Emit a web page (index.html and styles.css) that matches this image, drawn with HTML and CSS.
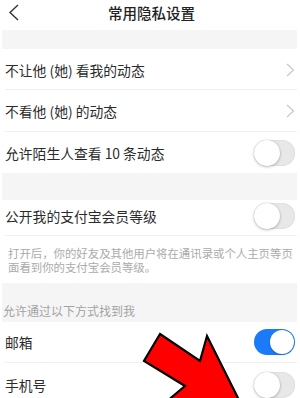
FILE: index.html
```html
<!DOCTYPE html>
<html lang="zh-CN">
<head>
<meta charset="utf-8">
<title>常用隐私设置</title>
<link rel="stylesheet" href="styles.css">
</head>
<body>
<div class="page">
  <header class="header">
    <svg class="back" width="12" height="17" viewBox="0 0 12 17"><polyline points="10,1 2,8.5 10,16" fill="none" stroke="#333" stroke-width="1.4"/></svg>
    <div class="title">常用隐私设置</div>
  </header>
  <div class="band band-top"></div>
  <div class="row r1"><span class="label">不让他 (她) 看我的动态</span><svg class="chev" width="9" height="14" viewBox="0 0 9 14"><polyline points="1,1 7.5,7 1,13" fill="none" stroke="#c9c9c9" stroke-width="1.2"/></svg></div>
  <div class="row r2"><span class="label">不看他 (她) 的动态</span><svg class="chev" width="9" height="14" viewBox="0 0 9 14"><polyline points="1,1 7.5,7 1,13" fill="none" stroke="#c9c9c9" stroke-width="1.2"/></svg></div>
  <div class="row r3 last"><span class="label">允许陌生人查看 10 条动态</span><span class="toggle"><span class="knob"></span></span></div>
  <div class="band band-mid"></div>
  <div class="row r4"><span class="label">公开我的支付宝会员等级</span><span class="toggle"><span class="knob"></span></span></div>
  <div class="desc">打开后，你的好友及其他用户将在通讯录或个人主页等页面看到你的支付宝会员等级。</div>
  <div class="band band-label">允许通过以下方式找到我</div>
  <div class="row r5"><span class="label">邮箱</span><span class="toggle on"><span class="knob"></span></span></div>
  <div class="row r6 last"><span class="label">手机号</span><span class="toggle"><span class="knob"></span></span></div>
  <svg class="arrow" width="300" height="398" viewBox="0 0 300 398"><polygon points="160,334 200,361 207,336 241,404 166,402 185,386 144,361" fill="#ff0000" stroke="#000" stroke-width="2.2" stroke-linejoin="miter"/></svg>
</div>
</body>
</html>
```

FILE: styles.css
```css
* { box-sizing: border-box; }
html, body { margin: 0; padding: 0; background: #fff; }
body {
  font-family: "Noto Sans CJK SC", "Noto Sans", sans-serif;
  color: #333;
  width: 300px;
  height: 398px;
  overflow: hidden;
}
.page {
  position: relative;
  width: 300px;
  height: 398px;
  padding: 0 3px 0 2px;
  overflow: hidden;
}
.header {
  position: relative;
  height: 30px;
  display: flex;
  align-items: center;
  justify-content: center;
}
.back {
  position: absolute;
  left: 6px;
  top: 4px;
}
.title {
  font-size: 14.5px;
  font-weight: 500;
  line-height: 26px;
  margin-top: -4px;
  margin-left: 4px;
  color: #222;
}
.band { background: #f5f5f5; }
.band-top { height: 19px; }
.band-mid { height: 27px; }
.band-label {
  height: 39px;
  font-size: 12px;
  color: #a3a3a3;
  padding-left: 1px;
  display: flex;
  align-items: flex-end;
  padding-bottom: 2px;
  line-height: 18px;
}
.row {
  margin-left: 3px;
  padding-right: 2px;
  display: flex;
  align-items: center;
  justify-content: space-between;
  border-bottom: 1px solid #f0f0f0;
  font-size: 13.8px;
  color: #2b2b2b;
}
.row.last { border-bottom: none; }
.r1 { height: 41px; padding-top: 1px; }
.r2 { height: 42px; }
.r3 { height: 41px; }
.r4 { height: 36px; padding-bottom: 3px; }
.r5 { height: 41px; }
.r6 { height: 41px; padding-top: 3px; }
.label { line-height: 20px; }
.toggle {
  position: relative;
  width: 41px;
  height: 26px;
  border-radius: 13px;
  background: #e8e8e8;
  box-shadow: inset 0 0 0 1px #e0e0e0;
}
.toggle .knob {
  position: absolute;
  left: 0;
  top: 0;
  width: 26px;
  height: 26px;
  border-radius: 50%;
  background: #fff;
  box-shadow: 0 1px 3px rgba(0,0,0,0.25), 0 0 0 0.5px rgba(0,0,0,0.08);
}
.toggle.on {
  background: #1a7af8;
  box-shadow: none;
}
.toggle.on .knob {
  left: auto;
  right: 1px;
  top: 1px;
  width: 24px;
  height: 24px;
  box-shadow: 0 1px 2px rgba(0,0,0,0.2);
}
.desc {
  height: 47px;
  padding: 10px 0 0 6px;
  font-size: 11.4px;
  line-height: 14px;
  color: #aaa;
}
.arrow {
  position: absolute;
  left: 0;
  top: 0;
  pointer-events: none;
}
```
